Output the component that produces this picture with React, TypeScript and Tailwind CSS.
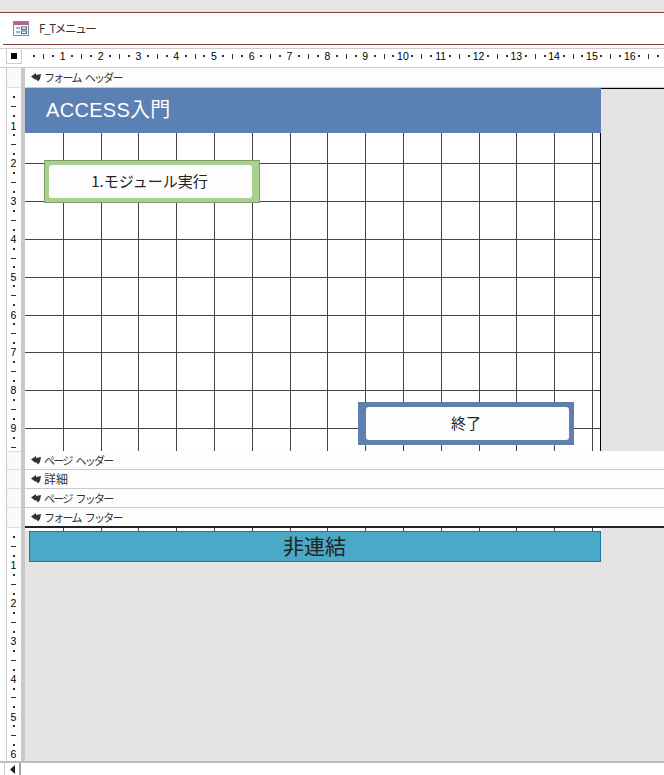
const jp = "font-['Noto_Sans_CJK_JP',sans-serif]";
const digit = "font-['Liberation_Sans',sans-serif] text-[10.5px] leading-none text-black";

function FormIcon() {
  return (
    <svg width="17" height="16" viewBox="0 0 17 16" className="shrink-0">
      <rect x="0.5" y="0.5" width="15" height="14" fill="#f4f7fb" stroke="#7d8fa8" />
      <rect x="1" y="1" width="14" height="3" fill="#b5648c" />
      <path d="M3 7h4M3 11h4" stroke="#4a6a94" strokeWidth="1" />
      <rect x="8.5" y="6" width="5" height="2.5" fill="none" stroke="#4a6a94" />
      <rect x="8.5" y="10" width="5" height="2.5" fill="none" stroke="#4a6a94" />
    </svg>
  );
}

function SectionMark() {
  return (
    <svg width="10" height="9" viewBox="0 0 10 9" className="shrink-0">
      <path d="M0 3.5 L5 0 V2 L10 1 L9 6 L7 8.5 L5.5 6.5 L4 6.5 Z" fill="#333" />
    </svg>
  );
}

function Section({ label, h, tight = true }: { label: string; h: string; tight?: boolean }) {
  return (
    <div className={`flex shrink-0 items-center gap-[3px] border-b border-[#c9c9c9] bg-[#fdfdfd] pl-[6px] ${h}`}>
      <SectionMark />
      <span
        className={`${jp} leading-none text-[#333] ${
          tight ? "text-[11px] tracking-[-1.7px] [word-spacing:3px]" : "text-[12px]"
        }`}
      >
        {label}
      </span>
    </div>
  );
}

function HRuler() {
  return (
    <div className="flex h-[18px] flex-1 items-center overflow-hidden pb-[4px] pl-[4.7px]">
      {Array.from({ length: 17 }, (_, i) => (
        <div key={i} className="grid w-[37.8px] shrink-0 grid-cols-4 items-center justify-items-center">
          <span className="h-[2px] w-[2px] bg-[#333]" />
          <span className="h-[5px] w-[1px] bg-[#333]" />
          <span className="h-[2px] w-[2px] bg-[#333]" />
          {i < 16 && <span className={digit}>{i + 1}</span>}
        </div>
      ))}
    </div>
  );
}

function VRuler({ count }: { count: number }) {
  return (
    <div className="flex shrink-0 flex-col items-center pr-[1px] pt-[4.7px]">
      {Array.from({ length: count }, (_, i) => (
        <div key={i} className="grid h-[37.8px] w-full shrink-0 grid-rows-4 items-center justify-items-center">
          <span className="h-[2px] w-[2px] bg-[#333]" />
          <span className="h-[1px] w-[5px] bg-[#333]" />
          <span className="h-[2px] w-[2px] bg-[#333]" />
          <span className={digit}>{i + 1}</span>
        </div>
      ))}
    </div>
  );
}

function GridColumns() {
  return (
    <div className="absolute inset-0 flex pl-[1px]">
      {Array.from({ length: 15 }, (_, i) => (
        <div key={i} className="w-[37.8px] shrink-0 border-r border-[#444]" />
      ))}
    </div>
  );
}

function GridRows() {
  return (
    <div className="absolute inset-0 flex flex-col">
      <div className="h-[31.4px] shrink-0 border-b border-[#444]" />
      {Array.from({ length: 7 }, (_, i) => (
        <div key={i} className="h-[37.8px] shrink-0 border-b border-[#444]" />
      ))}
    </div>
  );
}

function FormButton({ label, className, textClass }: { label: string; className: string; textClass: string }) {
  return (
    <div className={`absolute flex h-[43px] w-[216px] ${className}`}>
      <div className={`${jp} flex flex-1 items-center justify-center rounded-[3px] bg-[#fdfdfd] text-[15px] text-[#222] ${textClass}`}>
        {label}
      </div>
    </div>
  );
}

export default function App() {
  return (
    <div className="flex h-[775px] w-[664px] flex-col overflow-hidden bg-white">
      <div className="h-3 shrink-0 bg-[#e6e6e6]" />
      {/* Title */}
      <div className="shrink-0 border-t border-[#8c3f3f]">
        <div className="flex h-[31px] items-center gap-[9px] pl-[13px] pt-[1px]">
          <FormIcon />
          <span className={`${jp} text-[11.5px] leading-none tracking-[-1.3px] text-[#333]`}>F_Tメニュー</span>
        </div>
        <div className="ml-[3px] h-[1px] bg-[#8c3f3f]" />
      </div>
      <div className="h-[3px] shrink-0" />
      {/* Top ruler */}
      <div className="flex shrink-0 border-y border-[#cccccc] pl-[6px]">
        <div className="flex h-[15px] w-[16px] items-center justify-center border-x border-b border-[#cccccc]">
          <div className="size-[6px] bg-black" />
        </div>
        <div className="w-[3px]" />
        <HRuler />
      </div>
      {/* Design surface */}
      <div className="flex min-h-0 flex-1">
        <div className="ml-[6px] flex w-[19px] shrink-0 flex-col border-l border-r-[4px] border-l-[#cccccc] border-r-[#c8c8c8]">
          <div className="h-[20px] shrink-0 border-b border-[#dddddd] bg-[#fafafa]" />
          <VRuler count={9} />
          <div className="flex h-[18.1px] shrink-0 flex-col items-center gap-[8px] overflow-hidden pr-[1px] pt-[4px]">
            <span className="h-[2px] w-[2px] shrink-0 bg-[#333]" />
            <span className="h-[1px] w-[5px] shrink-0 bg-[#333]" />
          </div>
          <div className="h-[19px] shrink-0 border-y border-[#dddddd] bg-[#fafafa]" />
          <div className="h-[19px] shrink-0 border-b border-[#dddddd] bg-[#fafafa]" />
          <div className="h-[19px] shrink-0 border-b border-[#dddddd] bg-[#fafafa]" />
          <div className="h-[20px] shrink-0 border-b border-[#dddddd] bg-[#fafafa]" />
          <VRuler count={6} />
        </div>
        <div className="flex min-w-0 flex-1 flex-col bg-[#e4e4e4]">
          <Section label="フォーム ヘッダー" h="h-[20px]" />
          <div className="flex shrink-0">
            <div className="flex h-[45px] w-[576px] items-center bg-[#5b80b3] pb-[2px] pl-[21px] font-['Liberation_Sans','Noto_Sans_CJK_JP',sans-serif] text-[20px] tracking-[0.3px] text-white">
              ACCESS入門
            </div>
            <div className="flex-1 border-t border-black" />
          </div>
          {/* Detail grid */}
          <div className="relative h-[318px] w-[576px] shrink-0 overflow-hidden border-r border-black bg-white">
            <GridColumns />
            <GridRows />
            <FormButton
              label="1.モジュール実行"
              className="left-[19px] top-[27px] border border-[#7f9c6c] bg-[#a9d18e] py-[4px] pl-[4px] pr-[7px]"
              textClass="pr-[2px]"
            />
            <FormButton
              label="終了"
              className="left-[333px] top-[269px] bg-[#5f80ae] py-[5px] pl-[8px] pr-[5px]"
              textClass="pr-[3px]"
            />
          </div>
          <Section label="ページ ヘッダー" h="h-[19px]" />
          <Section label="詳細" h="h-[19px]" tight={false} />
          <Section label="ページ フッター" h="h-[19px]" />
          <Section label="フォーム フッター" h="h-[20px] !border-b-2 !border-[#222]" />
          {/* Footer section */}
          <div className="relative h-[3px] w-[576px] shrink-0 overflow-hidden bg-white">
            <GridColumns />
          </div>
          <div className="ml-[4px] h-[31px] w-[572px] shrink-0 border border-[#1a75a0] bg-[#49a9c6]">
            <div className={`${jp} pr-[1px] text-center text-[21px] leading-[27px] text-[#222]`}>非連結</div>
          </div>
        </div>
      </div>
      {/* Scroll bar */}
      <div className="flex h-[14px] shrink-0 border-t-2 border-[#bdbdbd] pl-[4px]">
        <div className="flex w-[17px] items-center justify-center border-r-2 border-l border-r-[#a5a5a5] border-l-[#cccccc]">
          <svg width="5" height="9" viewBox="0 0 5 9"><path d="M5 0V9L0 4.5Z" fill="#222" /></svg>
        </div>
      </div>
    </div>
  );
}
